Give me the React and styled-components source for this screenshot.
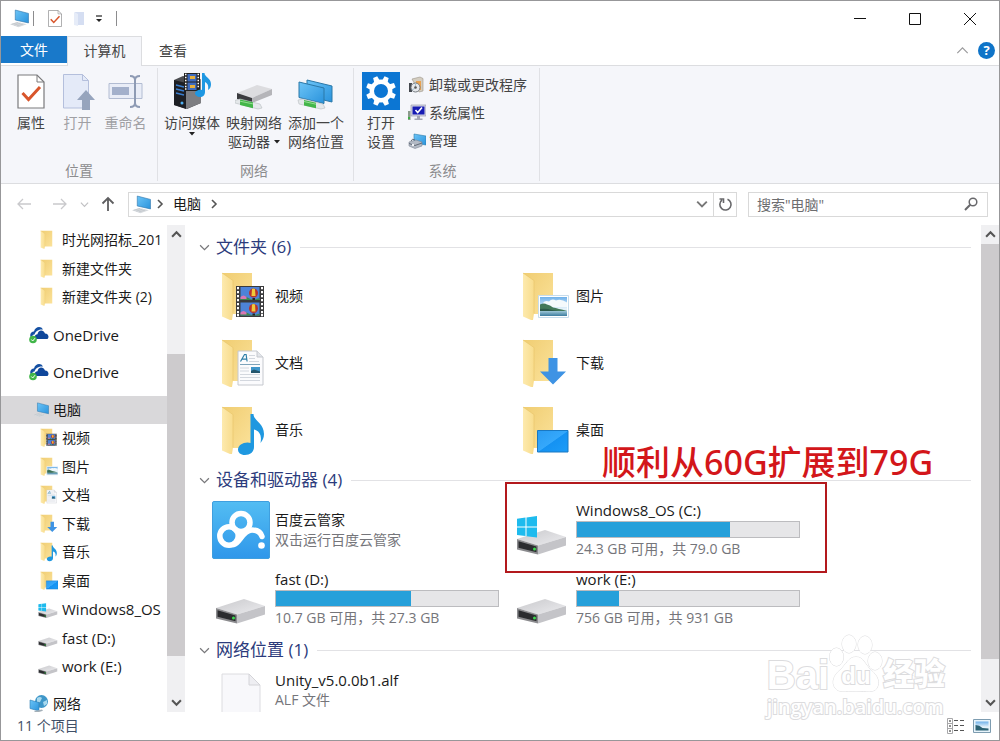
import React from 'react'
import styled, { createGlobalStyle } from 'styled-components'

const GlobalStyle = createGlobalStyle`
    * {
        box-sizing: border-box;
    }
    body {
        margin: 0;
        background: #fff;
        color: #1a1a1a;
        font: 14px/20px "Open Sans", "Noto Sans CJK SC", sans-serif;
    }
    button, input {
        font: inherit;
        color: inherit;
    }
    button {
        padding: 0;
        border: 0;
        background: none;
    }
    a {
        color: inherit;
        text-decoration: none;
    }
    ul {
        margin: 0;
        padding: 0;
        list-style: none;
    }
    svg {
        display: block;
        flex: none;
    }
`

/* ---------- icons ---------- */

const Gradients = () => (
    <HiddenSvg aria-hidden="true">
        <defs>
            <linearGradient id="folderBack" x1="0" y1="0" x2="1" y2="1">
                <stop offset="0" stopColor="#f0cd72" />
                <stop offset="1" stopColor="#fbe29a" />
            </linearGradient>
            <linearGradient id="folderFront" x1="0" y1="0" x2="1" y2="0">
                <stop offset="0" stopColor="#fdeaae" />
                <stop offset="1" stopColor="#f8dc8c" />
            </linearGradient>
            <linearGradient id="screen" x1="0" y1="0" x2="1" y2="1">
                <stop offset="0" stopColor="#6cc4f7" />
                <stop offset="1" stopColor="#2a93dc" />
            </linearGradient>
            <linearGradient id="desk" x1="0" y1="0" x2="1" y2="1">
                <stop offset="0" stopColor="#2a9bf2" />
                <stop offset="0.5" stopColor="#35a8fb" />
                <stop offset="0.52" stopColor="#1592f2" />
                <stop offset="1" stopColor="#1c9cf8" />
            </linearGradient>
            <linearGradient id="cloudApp" x1="0" y1="0" x2="0" y2="1">
                <stop offset="0" stopColor="#53bdf3" />
                <stop offset="1" stopColor="#2f97ea" />
            </linearGradient>
            <linearGradient id="metal" x1="0" y1="0" x2="1" y2="1">
                <stop offset="0" stopColor="#c9c9cc" />
                <stop offset="1" stopColor="#ececef" />
            </linearGradient>
            <linearGradient id="sky" x1="0" y1="0" x2="0" y2="1">
                <stop offset="0" stopColor="#6fb1ea" />
                <stop offset="0.6" stopColor="#e3f1fa" />
            </linearGradient>
            <linearGradient id="lake" x1="0" y1="0" x2="0" y2="1">
                <stop offset="0" stopColor="#a8cfdd" />
                <stop offset="1" stopColor="#3c7c9f" />
            </linearGradient>
        </defs>
    </HiddenSvg>
)

const FolderShape = () => (
    <>
        <path d="M10 6h30v41H20z" fill="url(#folderBack)" />
        <path d="M10 6l11 7.500v33l-1 6.500h-2l-8-3.500z" fill="url(#folderFront)" />
        <path d="M10 6l11 7.500v33" fill="none" stroke="#e8c468" strokeWidth=".6" />
    </>
)

const Balloon = ({ x, y }) => (
    <g transform={`translate(${x} ${y})`}>
        <path d="M0 0h19v13H0z" fill="#4d83d8" />
        <path d="M0 11q4-3 8 0t11 0v2H0z" fill="#3d8a4d" />
        <path d="M0 10q3-3 6 0v2H0z" fill="#d976b4" />
        <circle cx="13" cy="6" r="4.500" fill="#b9322c" />
        <path d="M11.500 2q1.500-1 3 0l.5 7h-4z" fill="#f0c93a" />
        <path d="M12 11h2.500v2H12z" fill="#2c2320" />
    </g>
)

const Film = () => (
    <>
        <path d="M24 19h28v31H24z" fill="#3a3a3c" />
        {[20, 24, 28, 32, 36, 40, 44, 47].map((y) => (
            <path key={y} d={`M25 ${y}h2v2.200h-2zM49 ${y}h2v2.200h-2z`} fill="#fff" />
        ))}
        <Balloon x={28.5} y={20} />
        <Balloon x={28.5} y={35.5} />
    </>
)

const Paper = () => (
    <>
        <path d="M26 17h19l6 6v28H26z" fill="#fbfbfd" stroke="#c5c8ce" />
        <path d="M45 17v6h6" fill="#e3e5ea" stroke="#c5c8ce" />
        <path d="M28.500 27.500l4-7h1.600l1 7M30 25.200h4.600" fill="none" stroke="#2f7fa8" strokeWidth="1.200" />
        <path d="M28 30.500h20" stroke="#7da3ba" />
        <path d="M37 21.500h6M37 24.500h6M37 27.500h10M28 34h9M28 37h9M28 40.500h20M28 43.500h20M28 46.500h20" stroke="#d3d7de" />
        <path d="M39 33h9v6h-9z" fill="#3f95c9" />
        <path d="M39 39v-2l3-1.500 6 2V39z" fill="#25566d" />
    </>
)

const Note = () => (
    <path
        d="M38.500 13h3c0 7 10.500 9 10.500 20 0 4-1.500 6.500-3.500 9 1.500-8-1-12-6.500-13.500V46c0 5-4 8-9 8-4.500 0-7-2.500-7-5.500 0-4 4.500-7 9.500-7 1.200 0 2.200.2 3 .6z"
        fill="#1f98e0"
    />
)

const Landscape = () => (
    <>
        <path d="M25.500 28.500h30v22h-30z" fill="#fff" stroke="#c6dcec" />
        <path d="M27 30h27v19H27z" fill="url(#sky)" />
        <path d="M30 36q2-3 6-1.500 3-3.500 7-1 5-2 11 2V40H30z" fill="#f4f9fc" />
        <path d="M27 43.500h27V49H27z" fill="url(#lake)" />
        <path d="M27 37.500q4-2 7 0 3 .5 6 3 5 1 14 3.500H27z" fill="#42785a" />
        <path d="M27 42q6-1 12 1l6 1H27z" fill="#2c5a4a" />
    </>
)

const DownArrow = () => <path d="M35.500 24h9v13.500H53L40 50.500 27 37.500h8.500z" fill="#3e93e4" />

const DeskScreen = () => <path d="M24.500 29.500h30.500v21.500H24.500z" fill="url(#desk)" stroke="#1a78c2" />

const Drive = () => (
    <>
        <path d="M4 38l28-9 21 7-28 8.500z" fill="url(#metal)" />
        <path d="M25 44.500L53 36v8.500L25 53.500z" fill="#c4c4c8" />
        <path d="M4 38l21 6.500v9L4 48.500z" fill="#8b8b8e" />
        <path d="M5.500 40.200l18 5.400v5.600l-18-4.400z" fill="#2b2c2f" />
        <circle cx="21.500" cy="48" r="1.500" fill="#3edb4f" />
    </>
)

const WinFlag = () => (
    <path
        d="M4 17.800l8.500-1.200v8.900H4zM13.500 16.400L24 15v10.500H13.500zM4 26.500h8.500v8.600L4 33.900zM13.500 26.500H24V36.500l-10.500-1.300z"
        fill="#1ebbee"
    />
)

const glyphs = {
    folder: <FolderShape />,
    video: <><FolderShape /><Film /></>,
    docs: <><FolderShape /><Paper /></>,
    music: <><FolderShape /><Note /></>,
    pictures: <><FolderShape /><Landscape /></>,
    downloads: <><FolderShape /><DownArrow /></>,
    desktop: <><FolderShape /><DeskScreen /></>,
    drive: <Drive />,
    osDrive: <><Drive /><WinFlag /></>,
    file: (
        <>
            <path d="M10 13h27l11 11v38H10z" fill="#f8f8fb" stroke="#dcdce0" />
            <path d="M37 13v11h11z" fill="#eeeef2" stroke="#d4d4d8" />
        </>
    ),
    cloudApp: (
        <>
            <rect x=".5" y=".5" width="57" height="57" rx="1.500" fill="url(#cloudApp)" stroke="#3f9fdf" />
            <g fill="none" stroke="#fff" strokeWidth="5.500">
                <circle cx="29" cy="21.500" r="9" />
                <circle cx="17" cy="35" r="9.200" />
                <path d="M22 43.500c6-2 9-14.500 18-14.500 6 0 9 3 10 6.500" strokeLinecap="round" />
            </g>
            <circle cx="49.500" cy="44.500" r="3.300" fill="#fff" />
        </>
    ),
}

const TileIcon = ({ name }) => (
    <svg width="58" height="58" viewBox="0 0 58 58">{glyphs[name]}</svg>
)

const PcIcon = ({ size = 20 }) => (
    <svg width={size} height={size} viewBox="0 0 18 18">
        <path d="M0 14.500l7-2.300 9 2.300-8 2.800z" fill="#d6dade" />
        <path d="M1.500 14.500l6-1.800M4 15.300l6-1.900M6.500 16l6-1.700" stroke="#b4bac0" strokeWidth=".5" />
        <path d="M5 1l12.500 3.200v9L5 10.400z" fill="url(#screen)" stroke="#3279ad" strokeWidth=".6" />
    </svg>
)

const OneDriveIcon = () => (
    <svg width="20" height="20" viewBox="0 0 20 20">
        <path d="M2 13c-2-4 .5-6.500 3-6.500C6 1.500 12 .5 14 4.500c-5-.5-7.500 2-8.500 5-2 0-2.500 1.500-2.500 3.500z" fill="#1450a3" />
        <path d="M6 14c-1-3 .5-4.800 2.500-4.800C9 4.500 14.500 4 16 8.500c3.500 0 4.500 4 2.500 5.500z" fill="#0f479b" />
        <circle cx="4" cy="14.500" r="3.800" fill="#41b649" />
        <path d="M2.300 14.500l1.400 1.500 2.300-2.800" fill="none" stroke="#fff" />
    </svg>
)

const NetworkIcon = () => (
    <svg width="20" height="20" viewBox="0 0 20 20">
        <circle cx="12.500" cy="7.500" r="6.500" fill="#3f97c9" />
        <path d="M8 4q3-2 5 0l-2 4-3 1zM14 8l4-2v4l-3 2z" fill="#a9d9ee" />
        <path d="M1 6l9 2.500V17l-9-2.500z" fill="url(#screen)" stroke="#2c7cb4" strokeWidth=".6" />
        <path d="M5 17l8-1.500 1 1.200L7 19z" fill="#a4b0b8" />
    </svg>
)

const TreeIcon = ({ name }) => {
    if (name === 'pc') return <PcSlot><PcIcon size={16} /></PcSlot>
    if (name === 'onedrive') return <OneDriveIcon />
    if (name === 'network') return <NetworkIcon />
    return <svg width="20" height="20" viewBox="3 4 52 52">{glyphs[name]}</svg>
}

const CheckPage = ({ width, height }) => (
    <svg width={width} height={height} viewBox="0 0 28 35" preserveAspectRatio="none">
        <path d="M1 1h19l7 7v26H1z" fill="#fff" stroke="#7a7a7c" strokeWidth="1.200" />
        <path d="M20 1v7h7" fill="none" stroke="#7a7a7c" />
        <path d="M5.500 19l6 6.500L23 13" fill="none" stroke="#d8552b" strokeWidth="3" />
    </svg>
)

const OpenIcon = () => (
    <svg width="34" height="37" viewBox="0 0 34 37">
        <path d="M2.500 1.500h19l6 6V35h-25z" fill="#e4eaf8" stroke="#b4bfdc" />
        <path d="M21.500 1.500v6h6" fill="none" stroke="#b4bfdc" />
        <path d="M25 17l9 10h-5v10h-8V27h-5z" fill="#96a4bd" />
    </svg>
)

const RenameIcon = () => (
    <svg width="36" height="37" viewBox="0 0 36 37">
        <path d="M1 10.500h33v15H1z" fill="#e9edf7" stroke="#b2bcd2" />
        <path d="M4 14h17v8H4z" fill="#a3b0cb" />
        <path d="M22 3q5 0 5 4v23q0 4-5 4M32 3q-5 0-5 4v23q0 4 5 4" fill="none" stroke="#8e9bb4" strokeWidth="2" />
    </svg>
)

const MediaIcon = () => (
    <svg width="38" height="38" viewBox="0 0 38 38">
        <path d="M1 8l9-4 18 4v23l-14 6-13-4z" fill="#4b4c50" />
        <path d="M1 8l12 3v26L1 33z" fill="#1d1f24" />
        <path d="M13 11l15-4v24l-15 6z" fill="#7d7e82" />
        <path d="M3 13l8 2M3 17l8 2M3 21l8 2" stroke="#3b7fd0" strokeWidth="1.300" />
        <circle cx="9" cy="31" r="1.500" fill="#4fb1f5" />
        <path d="M11 1h16v18H11z" fill="#222" />
        <path d="M14.500 2h9v7.500h-9zM14.500 10.500h9V18h-9z" fill="#3e6bbd" />
        <path d="M17 4h5v3h-5zM17 13h5v3h-5z" fill="#e8b03a" />
        <path d="M12 2.500h1.500M12 5.500h1.500M12 8.500h1.500M12 11.500h1.500M12 14.500h1.500M12 17h1.500M24.500 2.500H26M24.500 5.500H26M24.500 8.500H26M24.500 11.500H26M24.500 14.500H26" stroke="#fff" strokeWidth="1.500" />
        <path d="M29 1h2.500c0 4 6.500 5 6.500 11 0 3-1 5-3 6 1-5-1-7-3-8v10c0 3-2 5-5 5s-5-2-5-3.500c0-2.500 4-4.500 7-3.500z" fill="#1e97e2" />
    </svg>
)

const NetDriveIcon = () => (
    <svg width="38" height="38" viewBox="0 0 38 38">
        <path d="M2 21l20-8 15 4-20 9z" fill="#dcdcdf" />
        <path d="M17 26l20-9v6l-20 8z" fill="#b5b5b9" />
        <path d="M2 21l15 5v5L2 27z" fill="#3b3c3f" />
        <path d="M0 28.500l5-1.500 20 5 2 4-4 1-23-6z" fill="#e4e8ea" stroke="#b7bcc0" strokeWidth=".6" />
        <path d="M5 27.500l13 2.700v6L5 33z" fill="#43b649" />
        <path d="M5 29.200l13 2.700" stroke="#93dc90" />
    </svg>
)

const NetPlaceIcon = () => (
    <svg width="38" height="38" viewBox="0 0 38 38">
        <path d="M10 8l25 6v16l-25-6z" fill="url(#screen)" stroke="#2b78a8" />
        <path d="M2 10l25 6v15.500L2 25.500z" fill="url(#screen)" stroke="#2b78a8" />
        <path d="M1 28l5-1 20 5 2 4-4 1-22-5z" fill="#e4e8ea" stroke="#b7bcc0" strokeWidth=".6" />
        <path d="M7 28l12 2.700v5.500L7 33.500z" fill="#43b649" />
        <path d="M7 29.500l12 2.700" stroke="#93dc90" />
    </svg>
)

const SettingsIcon = () => (
    <svg width="38" height="38" viewBox="0 0 38 38">
        <path d="M0 0h38v38H0z" fill="#0c76d3" />
        <circle cx="19" cy="19" r="9.200" fill="none" stroke="#fff" strokeWidth="4.400" />
        {[22, 67, 112, 157, 202, 247, 292, 337].map((deg) => (
            <path key={deg} d="M16 9.500l.8-5.500h4.400l.8 5.500z" fill="#fff" transform={`rotate(${deg} 19 19)`} />
        ))}
    </svg>
)

const UninstallIcon = () => (
    <svg width="18" height="18" viewBox="0 0 18 18">
        <path d="M4 3l8-2 3 1.500V15l-4 1z" fill="#d4cdc0" stroke="#9a9488" strokeWidth=".6" />
        <path d="M8 5h5v9H8z" fill="#e9a14f" />
        <path d="M1 7h3v9H1z" fill="#44484e" />
        <circle cx="7.500" cy="11.500" r="4.500" fill="#e6e8eb" stroke="#777c82" />
        <path d="M7.500 7v3.500M4 14l2.500-1.500" stroke="#a3bfd0" />
        <circle cx="7.500" cy="11.500" r="1.300" fill="#555" />
    </svg>
)

const SysPropsIcon = () => (
    <svg width="18" height="18" viewBox="0 0 18 18">
        <path d="M0 7h2.500v9H0z" fill="#8a9a8c" />
        <path d="M0 13h2v2H0z" fill="#3cb043" />
        <path d="M3 1h15v11H3z" fill="#d7d8e4" stroke="#8f90a6" strokeWidth=".6" />
        <path d="M4.500 2.500h12v8h-12z" fill="#171cb4" />
        <path d="M7.500 6l2.200 2.500L14 3.500" fill="none" stroke="#fff" strokeWidth="1.600" />
        <path d="M9 12h3v2.500h2.500V16H6.500v-1.500H9z" fill="#a4a6b4" />
    </svg>
)

const ManageIcon = () => (
    <svg width="18" height="18" viewBox="0 0 18 18">
        <path d="M6 2l12 2v9L6 11z" fill="url(#screen)" stroke="#2a7cab" strokeWidth=".6" />
        <path d="M1 10l7-2 6 2v4l-7 2.500L1 14z" fill="#b3bac5" stroke="#7e8693" strokeWidth=".6" />
        <path d="M3 9q1-3 4-1M1 11.500l6 2 7-2.500" fill="none" stroke="#626a77" />
        <path d="M4 12h2v2H4z" fill="#f0f2f5" />
    </svg>
)

const Chevron = ({ dir = 'down', size = 10, color = '#555', width = 1.3 }) => {
    const points = {
        down: '1 3 5 7 9 3',
        up: '1 7 5 3 9 7',
        right: '3 1 7 5 3 9',
    }
    return (
        <svg width={size} height={size} viewBox="0 0 10 10">
            <polyline points={points[dir]} fill="none" stroke={color} strokeWidth={width} />
        </svg>
    )
}

const ArrowIcon = ({ dir, color }) => {
    const paths = {
        left: 'M15 8H2M7 3L2 8l5 5',
        right: 'M1 8h13M9 3l5 5-5 5',
        up: 'M8 15V2M2.500 7.500L8 2l5.500 5.500',
    }
    return (
        <svg width="16" height="16" viewBox="0 0 16 16">
            <path d={paths[dir]} fill="none" stroke={color} strokeWidth={dir === 'up' ? 1.8 : 1.3} />
        </svg>
    )
}

const Caret = () => (
    <svg width="6" height="4" viewBox="0 0 6 4"><path d="M0 0h6L3 3.500z" fill="#222" /></svg>
)

/* ---------- layout ---------- */

const HiddenSvg = styled.svg`
    position: absolute;
    width: 0;
    height: 0;
`
const Window = styled.div`
    position: relative;
    display: flex;
    flex-direction: column;
    height: 100vh;
    border: 1px solid #979799;
    overflow: hidden;
`
const TitleBar = styled.header`
    display: flex;
    align-items: center;
    height: 35px;
    padding: 0 2px 0 9px;
`
const QuickBar = styled.div`
    display: flex;
    align-items: center;
    flex: 1;
`
const QuickButton = styled.button`
    display: grid;
    place-items: center;
    width: ${props => props.$width || 24}px;
    height: 24px;
`
const Divider = styled.span`
    width: 1px;
    height: 15px;
    margin: 0 4px;
    background: #8c8c8e;
`
const CaptionButton = styled.button`
    display: grid;
    place-items: center;
    width: 55px;
    height: 34px;
`
const TabRow = styled.nav`
    display: flex;
    align-items: flex-start;
    height: 30px;
    border-bottom: 1px solid #dcdde0;
`
const FileTab = styled.button`
    width: 66px;
    height: 27px;
    background: #1979ca;
    color: #fff;
`
const Tab = styled.button`
    width: ${props => props.$active ? 75 : 62}px;
    height: 30px;
    padding-bottom: 2px;
    border: 1px solid ${props => props.$active ? '#dcdde0' : 'transparent'};
    border-bottom: 0;
    background: ${props => props.$active ? '#f5f6fa' : 'transparent'};
    color: #444;
`
const TabTools = styled.div`
    display: flex;
    align-items: center;
    gap: 9px;
    height: 28px;
    margin-left: auto;
    padding-right: 4px;
`
const Help = styled.button`
    width: 17px;
    height: 17px;
    border-radius: 50%;
    background: #0f74c8;
    color: #fff;
    font-size: 13px;
    font-weight: 700;
    line-height: 17px;
`
const Ribbon = styled.section`
    display: flex;
    height: 118px;
    padding: 2px 0;
    border-bottom: 1px solid #dcdde0;
    background: #f5f6fa;
`
const RibbonGroup = styled.div`
    display: flex;
    flex-direction: column;
    justify-content: space-between;
    padding: 4px ${props => props.$right || 6}px 0 ${props => props.$left || 3}px;
    border-right: 1px solid #e0e1e5;
`
const RibbonItems = styled.div`
    display: flex;
    align-items: flex-start;
`
const GroupLabel = styled.div`
    color: #8c8c8e;
    text-align: center;
`
const BigButton = styled.button`
    display: flex;
    flex-direction: column;
    align-items: center;
    gap: 3px;
    width: ${props => props.$width}px;
    color: #444;
    line-height: 19px;
    white-space: nowrap;
    &:disabled {
        color: #a0a0a4;
    }
`
const BigIcon = styled.span`
    display: grid;
    place-items: center;
    height: 38px;
`
const CaretBelow = styled.span`
    display: grid;
    justify-items: center;
`
const CaretLine = styled.span`
    display: flex;
    align-items: center;
    justify-content: center;
    gap: 4px;
`
const SmallButtons = styled.div`
    display: flex;
    flex-direction: column;
    padding-left: 4px;
`
const SmallButton = styled.button`
    display: flex;
    align-items: center;
    gap: 3px;
    height: 28px;
    padding-bottom: 2px;
    color: #444;
`
const NavRow = styled.div`
    display: flex;
    align-items: center;
    height: 40px;
    padding: 0 11px 0 13px;
`
const NavButtons = styled.div`
    display: flex;
    align-items: center;
    gap: 8px;
    width: 114px;
`
const NavButton = styled.button`
    display: grid;
    place-items: center;
    width: ${props => props.$narrow ? 12 : 20}px;
    height: 24px;
    &:first-child {
        margin-right: 8px;
    }
`
const AddressBox = styled.div`
    display: flex;
    align-items: center;
    flex: 1;
    height: 25px;
    padding-left: 3px;
    border: 1px solid #d9d9d9;
`
const Crumbs = styled.div`
    display: flex;
    align-items: center;
    flex: 1;
    gap: 8px;
    svg:first-child {
        margin-right: -4px;
    }
`
const BoxButton = styled.button`
    display: grid;
    place-items: center;
    width: 23px;
    height: 23px;
    border-left: ${props => props.$line ? '1px solid #d9d9d9' : '0'};
`
const SearchBox = styled.label`
    display: flex;
    align-items: center;
    width: 240px;
    height: 25px;
    margin-left: 11px;
    padding: 0 9px 0 8px;
    border: 1px solid #d9d9d9;
`
const SearchInput = styled.input`
    flex: 1;
    min-width: 0;
    height: 23px;
    padding: 0;
    border: 0;
    outline: 0;
    &::placeholder {
        color: #6d6d6f;
        opacity: 1;
    }
`
const Body = styled.div`
    display: flex;
    flex: 1;
    min-height: 0;
    padding-top: 1px;
`
const Sidebar = styled.aside`
    display: flex;
    width: 184px;
    overflow: hidden;
`
const Tree = styled.ul`
    display: flex;
    flex: 1;
    flex-direction: column;
    min-width: 0;
    margin-bottom: -6px;
    padding-top: 1px;
`
const TreeItem = styled.li`
    flex: 1;
    min-height: 0;
    margin-top: ${props => props.$gap ? 9 : 0}px;
    background: ${props => props.$selected ? '#d9d8da' : 'transparent'};
`
const TreeLink = styled.a`
    display: flex;
    align-items: center;
    gap: 4px;
    height: 100%;
    padding-left: ${props => props.$child ? 37 : 28}px;
    overflow: hidden;
    font-size: ${props => props.$latin ? 15 : 14}px;
    white-space: nowrap;
`
const PcSlot = styled.span`
    display: flex;
    justify-content: flex-end;
    width: 20px;
`
const ScrollTrack = styled.div`
    display: flex;
    flex: none;
    flex-direction: column;
    width: 18px;
    background: #f0f0f2;
`
const ScrollButton = styled.button`
    display: grid;
    place-items: center;
    height: 19px;
`
const ScrollSpace = styled.div`
    flex: ${props => props.$size} 0 0;
    background: ${props => props.$thumb ? '#cdcbcd' : 'transparent'};
`
const Content = styled.main`
    flex: 1;
    min-width: 0;
    padding: 7px 10px 0 14px;
    overflow: hidden;
`
const Section = styled.section`
    margin-bottom: 2px;
`
const SectionTitle = styled.h2`
    display: flex;
    align-items: center;
    gap: 6px;
    height: 30px;
    margin: 0;
    color: #2c3b7c;
    font-size: 17px;
    font-weight: 400;
    white-space: nowrap;
    &::after {
        content: '';
        flex: 1;
        height: 1px;
        margin-left: 3px;
        background: #e2e2e5;
    }
`
const Tiles = styled.div`
    display: grid;
    grid-template-columns: repeat(auto-fill, 301px);
    grid-auto-rows: ${props => props.$row}px;
    padding-left: 13px;
`
const Tile = styled.div`
    position: relative;
    display: flex;
    align-items: center;
    gap: 5px;
`
const TileText = styled.div`
    width: 224px;
`
const TileName = styled.div`
    font-size: ${props => props.$latin ? 15 : 14}px;
`
const Muted = styled.div`
    color: #75757a;
`
const Meter = styled.div`
    height: 17px;
    margin: 1px 0;
    border: 1px solid #bcbcbf;
    background: #e6e6e8;
`
const MeterFill = styled.div`
    height: 15px;
    background: #26a0da;
`
const Callout = styled.div`
    position: absolute;
    inset: -13px -13px -9px -8px;
    border: 2px solid #b3191d;
    pointer-events: none;
`
const CalloutText = styled.strong`
    position: absolute;
    bottom: 100%;
    left: 95px;
    padding-bottom: 3px;
    color: #d3161a;
    font-family: "Noto Sans", "Noto Sans CJK SC", sans-serif;
    font-size: 34px;
    font-weight: 500;
    line-height: 38px;
    white-space: nowrap;
`
const StatusBar = styled.footer`
    display: flex;
    align-items: center;
    height: 28px;
    padding: 0 8px 0 16px;
    color: #3f5068;
`
const ViewButtons = styled.div`
    display: flex;
    gap: 8px;
    margin-left: auto;
`
const Watermark = styled.div`
    position: absolute;
    right: 54px;
    bottom: 20px;
    color: #fff;
    font-family: "Liberation Sans", "Noto Sans CJK SC", sans-serif;
    font-weight: 700;
    -webkit-text-stroke: 2px #dcdcde;
    paint-order: stroke fill;
    pointer-events: none;
`
const MarkRow = styled.div`
    display: flex;
    align-items: flex-end;
    font-size: 40px;
    line-height: 38px;
`
const MarkChinese = styled.span`
    font-size: 31px;
    font-weight: 900;
`
const MarkSite = styled.div`
    font: 600 20px/26px "Open Sans", sans-serif;
`
const Paw = styled.span`
    position: relative;
    display: grid;
    justify-items: center;
    align-items: end;
    width: 54px;
    height: 62px;
    font-size: 24px;
    line-height: 36px;
    svg {
        grid-area: 1 / 1;
    }
    span {
        position: relative;
        grid-area: 1 / 1;
    }
`

/* ---------- data ---------- */

const tree = [
    { icon: 'folder', text: '时光网招标_201', child: true },
    { icon: 'folder', text: '新建文件夹', child: true },
    { icon: 'folder', text: '新建文件夹 (2)', child: true },
    { icon: 'onedrive', text: 'OneDrive', gap: true },
    { icon: 'onedrive', text: 'OneDrive', gap: true },
    { icon: 'pc', text: '电脑', gap: true, selected: true },
    { icon: 'video', text: '视频', child: true },
    { icon: 'pictures', text: '图片', child: true },
    { icon: 'docs', text: '文档', child: true },
    { icon: 'downloads', text: '下载', child: true },
    { icon: 'music', text: '音乐', child: true },
    { icon: 'desktop', text: '桌面', child: true },
    { icon: 'osDrive', text: 'Windows8_OS', child: true },
    { icon: 'drive', text: 'fast (D:)', child: true },
    { icon: 'drive', text: 'work (E:)', child: true },
    { icon: 'network', text: '网络', gap: true },
]

const sections = [
    {
        title: '文件夹 (6)',
        row: 67,
        items: [
            { icon: 'video', name: '视频' },
            { icon: 'pictures', name: '图片' },
            { icon: 'docs', name: '文档' },
            { icon: 'downloads', name: '下载' },
            { icon: 'music', name: '音乐' },
            { icon: 'desktop', name: '桌面' },
        ],
    },
    {
        title: '设备和驱动器 (4)',
        row: 69,
        items: [
            { icon: 'cloudApp', name: '百度云管家', note: '双击运行百度云管家' },
            { icon: 'osDrive', name: 'Windows8_OS (C:)', used: 69, note: '24.3 GB 可用，共 79.0 GB', callout: '顺利从60G扩展到79G' },
            { icon: 'drive', name: 'fast (D:)', used: 61, note: '10.7 GB 可用，共 27.3 GB' },
            { icon: 'drive', name: 'work (E:)', used: 19, note: '756 GB 可用，共 931 GB' },
        ],
    },
    {
        title: '网络位置 (1)',
        row: 50,
        items: [{ icon: 'file', name: 'Unity_v5.0.0b1.alf', note: 'ALF 文件' }],
    },
]

// latin names are set one size up so they sit level with the chinese ones
const isLatin = (text) => /^[\x20-\x7e]+$/.test(text)

/* ---------- parts ---------- */

const ScrollBar = ({ before, thumb, after }) => (
    <ScrollTrack>
        <ScrollButton aria-label="向上滚动"><Chevron dir="up" size={11} width={1.9} /></ScrollButton>
        <ScrollSpace $size={before} />
        <ScrollSpace $size={thumb} $thumb />
        <ScrollSpace $size={after} />
        <ScrollButton aria-label="向下滚动"><Chevron size={11} width={1.9} /></ScrollButton>
    </ScrollTrack>
)

const ContentTile = ({ icon, name, note, used, callout }) => (
    <Tile>
        <TileIcon name={icon} />
        <TileText>
            <TileName $latin={isLatin(name)}>{name}</TileName>
            {used !== undefined && (
                <Meter role="meter" aria-label={name} aria-valuenow={used} aria-valuemin={0} aria-valuemax={100}>
                    <MeterFill style={{ width: `${used}%` }} />
                </Meter>
            )}
            {note && <Muted>{note}</Muted>}
        </TileText>
        {callout && <Callout><CalloutText>{callout}</CalloutText></Callout>}
    </Tile>
)

const App = () => (
    <Window>
        <GlobalStyle />
        <Gradients />
        <TitleBar>
            <QuickBar>
                <PcIcon size={19} />
                <Divider />
                <QuickButton $width={34} aria-label="属性"><CheckPage width={14} height={17} /></QuickButton>
                <QuickButton $width={14} aria-label="新建文件夹">
                    <svg width="12" height="16" viewBox="0 0 12 16">
                        <path d="M2 1h9v13H4z" fill="#d5def2" />
                        <path d="M1 1l4 2v12l-4-1z" fill="#e6ecf8" />
                    </svg>
                </QuickButton>
                <QuickButton $width={26} aria-label="自定义">
                    <svg width="8" height="8" viewBox="0 0 8 8">
                        <path d="M1 1h6" stroke="#222" strokeWidth="1.200" />
                        <path d="M1 4h6L4 7z" fill="#222" />
                    </svg>
                </QuickButton>
                <Divider />
            </QuickBar>
            <CaptionButton aria-label="最小化">
                <svg width="12" height="12" viewBox="0 0 12 12"><path d="M0 5.500h12" stroke="#111" /></svg>
            </CaptionButton>
            <CaptionButton aria-label="最大化">
                <svg width="12" height="12" viewBox="0 0 12 12"><path d="M.5.500h11v11H.500z" fill="none" stroke="#111" /></svg>
            </CaptionButton>
            <CaptionButton aria-label="关闭">
                <svg width="12" height="12" viewBox="0 0 12 12"><path d="M0 0l12 12M12 0L0 12" stroke="#111" /></svg>
            </CaptionButton>
        </TitleBar>
        <TabRow>
            <FileTab>文件</FileTab>
            <Tab $active>计算机</Tab>
            <Tab>查看</Tab>
            <TabTools>
                <Chevron dir="up" size={13} color="#9a9a9c" width={0.9} />
                <Help>?</Help>
            </TabTools>
        </TabRow>
        <Ribbon>
            <RibbonGroup $left={7} $right={7}>
                <RibbonItems>
                    <BigButton $width={46}><BigIcon><CheckPage width={28} height={35} /></BigIcon>属性</BigButton>
                    <BigButton $width={47} disabled><BigIcon><OpenIcon /></BigIcon>打开</BigButton>
                    <BigButton $width={49} disabled><BigIcon><RenameIcon /></BigIcon>重命名</BigButton>
                </RibbonItems>
                <GroupLabel>位置</GroupLabel>
            </RibbonGroup>
            <RibbonGroup>
                <RibbonItems>
                    <BigButton $width={62}>
                        <BigIcon><MediaIcon /></BigIcon>
                        <span>访问媒体<CaretBelow><Caret /></CaretBelow></span>
                    </BigButton>
                    <BigButton $width={62}>
                        <BigIcon><NetDriveIcon /></BigIcon>
                        <span>映射网络<CaretLine>驱动器<Caret /></CaretLine></span>
                    </BigButton>
                    <BigButton $width={62}>
                        <BigIcon><NetPlaceIcon /></BigIcon>
                        <span>添加一个<br />网络位置</span>
                    </BigButton>
                </RibbonItems>
                <GroupLabel>网络</GroupLabel>
            </RibbonGroup>
            <RibbonGroup $left={4} $right={12}>
                <RibbonItems>
                    <BigButton $width={46}>
                        <BigIcon><SettingsIcon /></BigIcon>
                        <span>打开<br />设置</span>
                    </BigButton>
                    <SmallButtons>
                        <SmallButton><UninstallIcon />卸载或更改程序</SmallButton>
                        <SmallButton><SysPropsIcon />系统属性</SmallButton>
                        <SmallButton><ManageIcon />管理</SmallButton>
                    </SmallButtons>
                </RibbonItems>
                <GroupLabel>系统</GroupLabel>
            </RibbonGroup>
        </Ribbon>
        <NavRow>
            <NavButtons>
                <NavButton aria-label="后退"><ArrowIcon dir="left" color="#c9c9cc" /></NavButton>
                <NavButton aria-label="前进"><ArrowIcon dir="right" color="#c9c9cc" /></NavButton>
                <NavButton $narrow aria-label="最近"><Chevron size={9} color="#c0c0c3" /></NavButton>
                <NavButton aria-label="上移"><ArrowIcon dir="up" color="#5e5e60" /></NavButton>
            </NavButtons>
            <AddressBox>
                <Crumbs>
                    <PcIcon size={19} />
                    <Chevron dir="right" size={10} width={1.6} />
                    <a href="#pc">电脑</a>
                    <Chevron dir="right" size={10} width={1.6} />
                </Crumbs>
                <BoxButton aria-label="展开地址"><Chevron size={12} width={1.6} color="#777" /></BoxButton>
                <BoxButton $line aria-label="刷新">
                    <svg width="15" height="15" viewBox="0 0 15 15">
                        <path d="M9.500 2.200a5.600 5.600 0 1 1-5.500.8M1.500 2h4v4" fill="none" stroke="#68686b" strokeWidth="1.600" />
                    </svg>
                </BoxButton>
            </AddressBox>
            <SearchBox>
                <SearchInput type="text" placeholder={'搜索"电脑"'} aria-label="搜索" />
                <svg width="14" height="14" viewBox="0 0 14 14">
                    <circle cx="9" cy="5" r="3.800" fill="none" stroke="#68686b" strokeWidth="1.500" />
                    <path d="M6.200 7.800L1 13" stroke="#68686b" strokeWidth="2" />
                </svg>
            </SearchBox>
        </NavRow>
        <Body>
            <Sidebar>
                <Tree>
                    {tree.map((item, i) => (
                        <TreeItem key={i} $gap={item.gap} $selected={item.selected}>
                            <TreeLink href="#item" $child={item.child} $latin={isLatin(item.text)}>
                                <TreeIcon name={item.icon} />
                                {item.text}
                            </TreeLink>
                        </TreeItem>
                    ))}
                </Tree>
                <ScrollBar before={110} thumb={302} after={37} />
            </Sidebar>
            <Content>
                {sections.map((section) => (
                    <Section key={section.title}>
                        <SectionTitle><Chevron size={11} color="#77777a" width={1.1} />{section.title}</SectionTitle>
                        <Tiles $row={section.row}>
                            {section.items.map((item) => <ContentTile key={item.name} {...item} />)}
                        </Tiles>
                    </Section>
                ))}
            </Content>
            <ScrollBar before={0} thumb={415} after={34} />
        </Body>
        <StatusBar>
            11 个项目
            <ViewButtons>
                <QuickButton $width={18} aria-label="详细信息">
                    <svg width="18" height="16" viewBox="0 0 18 16">
                        <path d="M.5.500h5v15h-5zM.500 5.500h5M.500 10.500h5" fill="none" stroke="#a8a8aa" />
                        <path d="M2 2.500h2v1H2zM2 7.500h2v1H2zM2 12.500h2v1H2z" fill="#222" />
                        <path d="M7 2.500h4M13 2.500h4M7 7.500h4M13 7.500h4M7 12.500h4M13 12.500h4" stroke="#555" />
                    </svg>
                </QuickButton>
                <QuickButton $width={18} aria-label="大缩略图">
                    <svg width="18" height="14" viewBox="0 0 18 14">
                        <path d="M.5.500h17v13H.500z" fill="#e8f4fb" stroke="#7d9cb0" />
                        <path d="M2.500 2.500h13v9h-13z" fill="url(#sky)" />
                        <path d="M2.500 6q4 0 7 3l6 .5v2h-13z" fill="#2c6274" />
                    </svg>
                </QuickButton>
            </ViewButtons>
        </StatusBar>
        <Watermark>
            <MarkRow>
                Bai
                <Paw>
                    <svg width="54" height="60" viewBox="0 0 54 60">
                        <g fill="#fff" stroke="#dcdcde">
                            <ellipse cx="7.500" cy="23" rx="7" ry="9" />
                            <ellipse cx="20" cy="10" rx="7" ry="9" />
                            <ellipse cx="36" cy="11" rx="7" ry="9" />
                            <ellipse cx="46" cy="27" rx="7" ry="9" />
                            <path d="M27 23c8 0 9 8 15 13 7 6 9 12 6 18-3 5-10 3-21 3s-17 2-21-3c-4-6-1-13 5-18 6-5 8-13 16-13z" />
                        </g>
                    </svg>
                    <span>du</span>
                </Paw>
                <MarkChinese>经验</MarkChinese>
            </MarkRow>
            <MarkSite>jingyan.baidu.com</MarkSite>
        </Watermark>
    </Window>
)

export default App
